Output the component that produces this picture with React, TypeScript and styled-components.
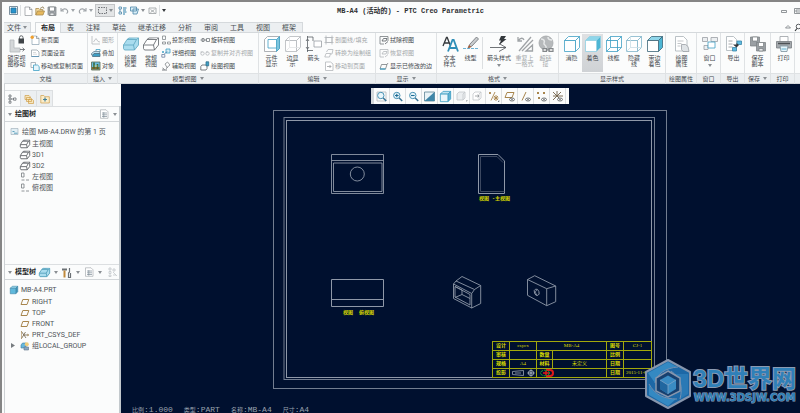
import React from "react";
import styled, { createGlobalStyle } from "styled-components";

const GlobalStyle = createGlobalStyle`
  *, *::before, *::after { box-sizing: border-box; }
  html, body, #root { height: 100%; margin: 0; }
  body { background: #fbfcfc; overflow: hidden; }
  button { font: inherit; color: inherit; border: 0; padding: 0; margin: 0; background: none; }
  svg { display: block; flex: none; overflow: visible; }
  ul { list-style: none; margin: 0; padding: 0; }
`;

const ui = `"Roboto", "Noto Sans CJK SC", sans-serif`;
const mono = `"Liberation Mono", "Noto Sans CJK SC", monospace`;

const BLUE = "#3f9fc4";
const DARK = "#5a5f64";
const GREY = "#b4b8bb";
const TAN = "#a8864e";

/* ---------- window ---------- */

const Window = styled.div`
  height: 100%;
  display: flex;
  flex-direction: column;
  border-top: 2px solid #858585;
  border-left: 2px solid #858585;
  padding-left: 2px;
  background: #fbfcfc;
  color: #44494e;
  font-family: ${ui};
  font-size: 6px;
  overflow: hidden;
`;

const TitleBar = styled.header`
  display: flex;
  align-items: center;
  height: 17px;
  flex: none;
`;

const QuickBar = styled.div`
  flex: 1 1 0;
  display: flex;
  align-items: center;
  padding-left: 3px;
`;

const QuickButton = styled.button<{ $arrow?: boolean }>`
  width: ${(p) => (p.$arrow ? 6 : 12)}px;
  height: 14px;
  display: flex;
  align-items: center;
  justify-content: center;
`;

const SelectPair = styled.div`
  display: flex;
  height: 13px;
  align-items: center;
  margin: 0 1px;
  border: 1px solid #c3c5c7;
  background: #e3e5e6;
`;

const VLine = styled.span<{ $h: number }>`
  width: 1px;
  height: ${(p) => p.$h}px;
  margin: 0 1px;
  background: #dcdfe1;
  align-self: center;
`;

const Title = styled.h1`
  margin: 0;
  padding-left: 14px;
  font: bold 7px/10px ${mono};
  color: #2f3133;
  white-space: pre;
`;

const WindowControls = styled.div`
  flex: 1 1 0;
  display: flex;
  justify-content: flex-end;
  align-items: center;
  gap: 7px;
  overflow: hidden;
`;

/* ---------- ribbon ---------- */

const TabRow = styled.nav`
  display: flex;
  align-items: stretch;
  height: 14px;
  flex: none;
  padding-top: 3px;
  border-bottom: 1px solid #d5d9dc;
`;

const Tab = styled.button<{ $active?: boolean; $file?: boolean }>`
  display: flex;
  align-items: center;
  gap: 2px;
  padding: 0 ${(p) => (p.$file ? 3 : p.$active ? 5 : 6)}px;
  font-size: 7px;
  line-height: 8px;
  white-space: nowrap;
  border-top: 1px solid #d5d9dc;
  background: ${(p) => (p.$active ? "#fbfcfc" : "#eceff1")};
  font-weight: ${(p) => (p.$active ? 700 : 400)};
  color: ${(p) => (p.$active ? "#25282a" : "#4a4f54")};
  border-right: ${(p) => (p.$file || p.$active ? "1px solid #d5d9dc" : "0")};
  border-left: ${(p) => (p.$active ? "1px solid #d5d9dc" : "0")};
  margin-right: ${(p) => (p.$file ? 4 : 0)}px;
  margin-bottom: ${(p) => (p.$active ? -1 : 0)}px;
  &:last-of-type { border-right: 1px solid #d5d9dc; }
`;

const TabTools = styled.div`
  margin-left: auto;
  display: flex;
  align-items: center;
  gap: 4px;
  overflow: hidden;
`;

const Ribbon = styled.div`
  display: flex;
  flex: none;
  height: 51px;
  overflow: hidden;
`;

const GroupBox = styled.section<{ $w: number }>`
  width: ${(p) => p.$w}px;
  flex: none;
  display: flex;
  flex-direction: column;
  border-right: 1px solid #dfe2e4;
`;

const GroupBody = styled.div`
  flex: 1;
  display: flex;
  padding-left: 2px;
`;

const GroupLabel = styled.div`
  height: 11px;
  display: flex;
  align-items: center;
  justify-content: center;
  gap: 3px;
  border-top: 1px solid #dfe2e4;
  border-bottom: 1px solid #d2d6d9;
  background: #eceff1;
  white-space: nowrap;
  line-height: 8px;
`;

const RibbonRest = styled.div`
  flex: 1;
  display: flex;
  flex-direction: column;
  justify-content: flex-end;
`;

const BigButton = styled.button<{ $w?: number; $on?: boolean; $off?: boolean }>`
  width: ${(p) => p.$w ?? 21}px;
  flex: none;
  margin: 1px 0;
  padding-top: 2px;
  display: flex;
  flex-direction: column;
  align-items: center;
  line-height: 6px;
  white-space: pre;
  text-align: center;
  color: ${(p) => (p.$off ? "#a3a7aa" : "#44494e")};
  background: ${(p) => (p.$on ? "linear-gradient(#dfe1e3, #cfd2d5)" : "none")};
  & > svg { margin-bottom: 3px; }
  & > span + svg { margin: 3px 0 0; }
`;

const Stack = styled.div<{ $w?: number; $indent?: number }>`
  display: flex;
  flex-direction: column;
  flex: none;
  width: ${(p) => (p.$w ? `${p.$w}px` : "auto")};
  margin-left: ${(p) => p.$indent ?? 0}px;
`;

const SmallButton = styled.button<{ $off?: boolean }>`
  display: flex;
  align-items: center;
  gap: 1px;
  height: 13px;
  line-height: 8px;
  white-space: nowrap;
  color: ${(p) => (p.$off ? "#a3a7aa" : "#44494e")};
`;

/* ---------- body ---------- */

const Body = styled.div`
  flex: 1;
  min-height: 0;
  display: flex;
`;

const Side = styled.aside`
  width: 117px;
  flex: none;
  display: flex;
  flex-direction: column;
  padding-top: 6px;
  border-left: 1px solid #cdd1d4;
`;

const SideTabs = styled.div`
  display: flex;
  height: 16px;
  flex: none;
`;

const SideTab = styled.button<{ $active?: boolean }>`
  width: 16px;
  display: flex;
  align-items: center;
  justify-content: center;
  border: 1px solid #dcdfe1;
  border-left: 0;
  border-bottom: 0;
  background: ${(p) => (p.$active ? "#fbfcfc" : "#eceff1")};
`;

const Pane = styled.section<{ $fixed?: boolean }>`
  flex: ${(p) => (p.$fixed ? "0 0 158px" : "1")};
  border-right: 2px solid #c3c9cd;
  overflow: hidden;
`;

const PaneHead = styled.div`
  display: flex;
  align-items: center;
  height: 16px;
  padding: 0 1px 0 3px;
  gap: 3px;
  border-top: 1px solid #dcdfe1;
  border-bottom: 1px solid #d2d6d9;
`;

const PaneTitle = styled.h2`
  margin: 0;
  font-size: 7px;
  line-height: 8px;
  font-weight: 700;
  color: #25282a;
  white-space: nowrap;
`;

const HeadTools = styled.div<{ $push?: boolean }>`
  display: flex;
  align-items: center;
  gap: 2px;
  margin-left: ${(p) => (p.$push ? "auto" : "0")};
`;

const HeadButton = styled.button<{ $arrow?: boolean }>`
  width: ${(p) => (p.$arrow ? 7 : 11)}px;
  height: 14px;
  display: flex;
  align-items: center;
  justify-content: center;
`;

const Tree = styled.ul`
  padding-top: 4px;
`;

const Node = styled.li<{ $level: number }>`
  display: flex;
  align-items: center;
  gap: ${(p) => (p.$level ? 2 : 3)}px;
  height: 11px;
  margin-bottom: ${(p) => (p.$level ? 0 : 1)}px;
  padding-left: ${(p) => (p.$level ? 15 : 5)}px;
  font-size: 7px;
  line-height: 10px;
  white-space: nowrap;
  color: #4e5358;
`;

const Expander = styled.button`
  width: 5px;
  margin-left: -9px;
  margin-right: 2px;
`;

const Canvas = styled.main`
  position: relative;
  flex: 1;
  min-width: 0;
  display: flex;
  flex-direction: column;
  align-items: center;
  padding: 4px 0 0 19px;
  background: #00102f;
  overflow: hidden;
`;

const ViewBar = styled.div`
  display: flex;
  height: 16px;
  flex: none;
  padding-right: 3px;
  background: #fbfcfc;
  border-left: 3px solid #d5d9dc;
`;

const ViewButton = styled.button`
  width: 16px;
  display: flex;
  align-items: center;
  justify-content: center;
  border-right: 1px solid #dcdfe1;
`;

const Sheet = styled.div`
  position: relative;
  flex: none;
  width: 394px;
  height: 280px;
  margin-top: 6px;
`;

const Caption = styled.span<{ $x: number; $y: number }>`
  position: absolute;
  left: ${(p) => p.$x}px;
  top: ${(p) => p.$y}px;
  font: bold 5px/6px ${mono};
  color: #d6d600;
  white-space: pre;
`;

const TitleBlock = styled.table`
  position: absolute;
  right: 15px;
  bottom: 12px;
  width: 159px;
  table-layout: fixed;
  border-collapse: collapse;
  font: 5px/6px "Liberation Serif", "Noto Sans CJK SC", serif;
  color: #dede00;
  td, th {
    height: 9px;
    padding: 0;
    border: 1px solid #a3a80c;
    text-align: center;
    font-weight: 400;
    white-space: nowrap;
  }
  th { font-weight: 700; }
`;

const Symbols = styled.div`
  display: flex;
  align-items: center;
  justify-content: center;
  gap: 3px;
`;

const Status = styled.footer`
  align-self: stretch;
  display: flex;
  gap: 11px;
  margin-top: auto;
  margin-left: -8px;
  height: 8px;
  flex: none;
  font: 8px/10px ${mono};
  color: #98a0ad;
  white-space: nowrap;
`;

const StatusKey = styled.span`
  font-size: 6px;
`;

const Watermark = styled.div`
  position: absolute;
  right: 4px;
  bottom: 4px;
  display: flex;
  align-items: center;
  gap: 2px;
`;

const Brand = styled.div`
  display: flex;
  flex-direction: column;
  align-items: center;
  color: #2f80b8;
  font-family: "Liberation Sans", "Noto Sans CJK SC", sans-serif;
  font-weight: 700;
  -webkit-text-stroke: 2px #8c9bb2;
  paint-order: stroke fill;
  white-space: nowrap;
`;

const BrandName = styled.span`
  font-size: 24px;
  line-height: 26px;
`;

const BrandUrl = styled.span`
  font-family: "DejaVu Sans", sans-serif;
  font-size: 10px;
  line-height: 11px;
  -webkit-text-stroke-width: 1px;
`;

/* ---------- icons ---------- */

const Svg = ({ s = 10, children }: { s?: number; children: React.ReactNode }) => (
  <svg width={s} height={s} viewBox={`0 0 ${s} ${s}`} fill="none" stroke={DARK} strokeWidth="0.8" aria-hidden="true">
    {children}
  </svg>
);

const Caret = ({ color = "#8a8f93" }: { color?: string }) => (
  <svg width="4" height="3" viewBox="0 0 4 3" aria-hidden="true">
    <path d="M0 0h4L2 3z" fill={color} />
  </svg>
);

type CubeProps = { s?: number; front?: string; top?: string; side?: string; line?: string; wire?: string };
const Cube = ({ s = 16, front = "#fff", top = "#fff", side = "#fff", line = BLUE, wire }: CubeProps) => (
  <svg width={s} height={s} viewBox="0 0 16 16" fill="none" stroke={line} strokeWidth={s < 14 ? 1.2 : 0.8} aria-hidden="true">
    <path d="M.5 4.5 4.5.5h11l-4 4z" fill={top} />
    <path d="M11.5 4.5l4-4v11l-4 4z" fill={side} />
    <path d="M.5 4.5h11v11H.5z" fill={front} />
    {wire && <path d="M4.5 .5v11h11M4.5 11.5l-4 4" stroke={wire} />}
  </svg>
);

const BlockShape = ({ s = 16, fill = "#fff", line = DARK }: { s?: number; fill?: string; line?: string }) => (
  <svg width={s} height={s} viewBox="0 0 16 16" fill={fill} stroke={line} strokeWidth={s < 14 ? 1.4 : 0.8} aria-hidden="true">
    <path d="M4 3.5 6 2h9.500v7l-4 5H1.500L.5 12.500V9z" />
    <path d="M4 3.500h9.500L15.500 2M13.500 3.500 10.500 9H.5M10.500 9l1 5" />
  </svg>
);

const LockView = () => (
  <Svg s={16}>
    <path d="M1 4h4v8h6v4H1z" fill="#d4d7d9" stroke={GREY} />
    <path d="M9.500 2.500h5.500v5H9.500z" fill="#3f4448" stroke="none" />
    <path d="M10.500 3V1.500a1.700 1.700 0 0 1 3.500 0V3" stroke="#3f4448" />
    <path d="M11 13.500h4.500M13.500 11.700l2 1.800-2 1.800" />
  </Svg>
);
const Page = ({ mark }: { mark?: string }) => (
  <Svg>
    <path d="M2 1h4.500L9 3.500V9.500H2z" fill="#fff" stroke={mark ? "#8aa0b0" : "#8f9498"} strokeWidth="0.7" />
    <path d="M6.500 1v2.500H9" strokeWidth="0.5" />
    {mark && <circle cx="2.2" cy="2.2" r="1.7" fill={mark} stroke="none" />}
  </Svg>
);
const PageSetup = () => (
  <Svg><path d="M1.500 2h5.500l2 2v4.500h-7.500z" fill="#fff" stroke="#9aa4ac" /><path d="M1.500 8.500h7.500" stroke="#5591b5" /><path d="M3 4.500h3M3 6.200h4" strokeWidth=".5" stroke={GREY} /></Svg>
);
const CopyPage = () => (
  <Svg><path d="M1 1.500h4.500v5H1z" fill="#fff" stroke="#9aa4ac" /><path d="M3.500 4h4l1.700 1.500v4H3.500z" fill="#e6f5fb" stroke={BLUE} /></Svg>
);
const Graph = () => <Svg><path d="M1 1v8h8" stroke={GREY} /><path d="M2.500 7 5 3.500l2 3 2 .5" stroke={GREY} /></Svg>;
const Overlay = () => (
  <Svg><path d="M.5 5.500 3 3.500h6l-2 3.500H.5z" fill="#bfe3f1" stroke="#6c8290" /><path d="M1.500 7.500 3 5.500h6v3H1.500z" fill={BLUE} stroke="#4b6d80" /><path d="M5 3V1.500h4v2" stroke={BLUE} /></Svg>
);
const ObjectPic = () => (
  <Svg><path d="M.5 1h8.500v8H.5z" fill="#6cbde2" stroke="#586a50" /><path d="M1 6h7.500v2.500H1z" fill="#8a6a2a" stroke="none" /><path d="M3 1.500v6M6.500 3v5" stroke="#3c6b3c" strokeWidth="1.6" /><path d="M3.500 5h3" stroke="#f1d067" /></Svg>
);
const Projection = () => <Svg><path d="M1.500 1h3v3.500h-3zM1.500 7h3v2h-3zM6.500 7h3v2h-3z" stroke="#83888c" /></Svg>;
const Detail = () => (
  <Svg><path d="M5 1h4v4H5z" fill="#d5edf6" stroke={BLUE} /><path d="M.8 6.500h3v2.700h-3z" stroke="#6b7fa0" /><path d="M3.500 6 6 3.500" stroke="#3c70a0" /><circle cx="2" cy="4" r="1" fill={BLUE} stroke="none" /></Svg>
);
const Auxiliary = () => <Svg><path d="M4 3l2.500-2L9 4 6 6.500z" stroke="#83888c" /><path d="M1 9h5M1.500 7l2 1.500M5 7.500l1.500-1" /></Svg>;
const Rotate = () => <Svg><path d="M.5 5h3M6.500 3.500h3v3h-3zM2 3.500h2v3H2z" stroke="#777c80" /><path d="M4 5h2.500" /></Svg>;
const CopyAlign = () => <Svg><circle cx="2.5" cy="5.5" r="1.7" stroke={GREY} /><circle cx="7.5" cy="5.5" r="1.7" stroke={GREY} /><path d="M.5 4h2M6 4h2" stroke={GREY} /></Svg>;
const DrawView = () => <Svg><path d="M.8 5.500 2 4h5v3.500L6 9H.8z" fill="#fff" /><path d="M6 .8h2.700v4H6z" fill={BLUE} stroke="#2d6f8d" /></Svg>;
const Hatch = () => <Svg><path d="M2 2.500h6v5H2zM2 .5v9M8 .5v9M.5 2.500h9M.5 7.500h9" stroke={GREY} /></Svg>;
const Convert = () => <Svg><path d="M2.500 4 4 1.500h5L8 6H5" stroke={GREY} /><path d="M.8 9 2 5.500h4.500L5.500 9z" stroke={GREY} fill="#fff" /></Svg>;
const MovePage = () => <Svg><path d="M1.500 1h5L9 3v6.500H1.500z" stroke={GREY} fill="#fff" /><path d="M3 5.500h4M5.500 4 7 5.500 5.500 7" stroke="#9a9ea1" /></Svg>;
const Erase = ({ off }: { off?: boolean }) => <Svg><path d="M1 9V1.500h8V6M1 9h4" stroke={off ? GREY : "#777c80"} /><path d="M3 6 4.500 3.500H8L7 6zM6 9l3-2.500" stroke={off ? GREY : DARK} /></Svg>;
const Edges = () => <Svg><path d="M1 8 2.500 3.500H8L9 2M1 8h5.500L8 3.500" stroke="#777c80" /><path d="M1 8h5.500" stroke={BLUE} strokeWidth="1.2" /></Svg>;

const CompDisplay = () => (
  <svg width="16" height="16" viewBox="0 0 16 16" fill="none" strokeWidth="0.8" aria-hidden="true">
    <path d="M.5 3.500 3.500.5h12v12l-3 3H.5z" stroke="#9aa0a5" fill="#fff" />
    <path d="M12.500 3.500l3-3v12l-3 3z" fill="#7cc5de" stroke={BLUE} />
    <path d="M4 3.500h8.500V12H4z" fill="#fff" stroke={BLUE} />
  </svg>
);
const ArrowsIcon = () => (
  <Svg s={16}><path d="M1 1h6M1 14.500h6M1.500 0v3M1.500 13v3M1.500 3v10M0 5l1.500-2L3 5M0 11l1.500 2L3 11M7 1v4" /><path d="M8 5h7.500v6H8z" stroke="#9aa0a5" fill="#fff" /></Svg>
);
const TextStyle = () => (
  <Svg s={16}><path d="M1 10 4.500 1.500h.7L8.500 10M2 7h5" stroke="#34383c" strokeWidth="1.3" /><path d="M6 15.500 10.500 4h1.200L16 15.500M7.500 12h6.500" stroke="#2f8fb8" strokeWidth="1.8" /></Svg>
);
const LineStyle = () => (
  <Svg s={16}><path d="M0 12.500h16" stroke="#4b9fc9" strokeDasharray="3 1" /><path d="M5 12 7 8l6.500-7L15.500 3 9 10z" fill="#c9ccce" stroke="#6b6f73" /><path d="M5 12l1-3 2.500 2z" fill="#b05a30" stroke="none" /></Svg>
);
const ArrowStyle = () => (
  <Svg s={16}><path d="M-1 11.500h16M8 7.500l7 4-7 4" stroke="#4c5155" /><path d="M10 0h5l-2 3h2.500L8 9l2-4.500H8z" fill="#34383c" stroke="none" /></Svg>
);
const Repeat = () => (
  <Svg s={16}><path d="M1 1v4h4M1 5c3-4 5-3 6-1M14 1 2 15M16 4 5 15M9 15h6.500V9z" stroke="#9fa3a6" strokeWidth="1.3" /></Svg>
);
const Link = () => (
  <Svg s={16}><circle cx="8" cy="7" r="7" fill="#b6b9bb" stroke="#a3a7aa" /><path d="M3 3c3 0 4 2 3 4s3 2 2 5M10 1c0 3 2 3 4 3" stroke="#e6e8e9" strokeWidth="1.5" /><path d="M5 12.500h3.500v3H5zM11 12.500h4v3h-4zM8 14h4" fill="#ddd" stroke="#84888b" strokeWidth="1.2" /></Svg>
);
const Props = () => (
  <Svg s={16}><path d="M1.500.5h8L13 4v11H1.500z" fill="#fff" stroke="#a9b2b8" /><path d="M3.500 5h6M3.500 7.500h4M3.500 10h3" stroke={GREY} /><path d="M7.500 8.500h4l2.500 2 1 5H9l-1.500-2z" fill="#dfe3e6" stroke="#9aa0a5" /></Svg>
);
const WindowsIcon = () => (
  <Svg s={16}><path d="M.5 1.500h5v4h-5zM9 1.500h6.500v4H9zM2 9.500h4v4H2z" stroke="#9aa0a5" fill="#eceff1" /><path d="M6 6h7v6H6z" fill="#fff" stroke={BLUE} /></Svg>
);
const ExportIcon = () => (
  <Svg s={16}><path d="M.5.5h7l3 3v11H.5z" fill="#fff" stroke="#a9b2b8" /><path d="M2.500 5h4M2.500 8h4M2.500 11h4" stroke="#8f9498" /><path d="M11 5h4.500v3.500H11zM6.500 11.500h4V15h-4z" fill="#5fbbe0" stroke="#3a86a8" /><path d="M7 8.500h3.500V7L13 9l-2.500 2.500z" fill="#34383c" stroke="none" /></Svg>
);
const Disk = () => (
  <svg width="10" height="10" viewBox="0 0 10 10" fill="#a5aaae" stroke="#777c80" strokeWidth=".7" aria-hidden="true">
    <path d="M1 1h8v8.500H2L1 8.500z" /><path d="M2.500 1h5v4h-5z" fill="#fff" /><path d="M3 7h4v2.500H3z" fill="#e7e9ea" />
  </svg>
);
const SaveCopy = () => (
  <svg width="16" height="16" viewBox="0 0 16 16" fill="#9a9fa3" stroke="#777c80" strokeWidth=".7" aria-hidden="true">
    <path d="M.5 1h9v9h-9z" /><path d="M2.500 1h5v4h-5z" fill="#fff" /><path d="M6.500 6.500h9V15h-9z" /><path d="M8.500 6.500h5v4h-5z" fill="#fff" /><path d="M9 12.500h4V15H9z" fill="#e7e9ea" />
  </svg>
);
const Printer = () => (
  <Svg s={16}><path d="M4 .5h8V6H4z" fill="#fff" stroke="#9aa0a5" /><path d="M.5 5.500h15V12H.5z" fill="#a5aaae" stroke="#777c80" /><path d="M2 7.500h12" stroke="#4c5155" strokeWidth="1.5" /><path d="M4 10h8l-1 5.500H5z" fill="#e6f5fb" stroke="#7a8f9a" /><path d="M5.500 13h5" stroke={BLUE} /></Svg>
);

const AppMark = () => <Svg s={9}><path d="M.5.5h8v8h-8z" stroke="#5d7587" /><path d="M2 2h5v5H2z" fill="#2793cc" stroke="#246f9a" /></Svg>;
const Folder = () => <Svg><path d="M.8 9V2.500h3l1 1h3V5" fill="#f5dca0" stroke="#a98b4f" /><path d="M.8 9 2.500 5h7L8 9z" fill="#e6b85c" stroke="#a98b4f" /><path d="M5 2.500 8 .8l1 2" stroke="#8b7a50" /></Svg>;
const Undo = ({ flip }: { flip?: boolean }) => <Svg s={9}><g transform={flip ? "matrix(-1 0 0 1 9 0)" : undefined}><path d="M1 2v3h3M1.200 5C3 2.500 6 2 7.500 4.500 8 6 7.500 7 6.500 7.500" stroke="#a0a5a9" strokeWidth="1.1" /></g></Svg>;
const SelectBox = () => <Svg s={9}><path d="M.5 1.500h8v6h-8z" stroke="#55595d" strokeDasharray="1.5 1" /></Svg>;
const Regen = () => <Svg s={9}><path d="M1 1h2.500v2H1zM1 6h2.500v2H1zM2 3v3" stroke="#4b86a8" /><path d="M5 2h3.500M5 4h3M5 6h3.500M5 8h2" stroke="#2f7fa8" strokeWidth="1.1" /></Svg>;
const Cascade = () => <Svg s={9}><path d="M.5 1h6v4h-6zM3 3h5.500L7 8H3z" fill="#d9eef7" stroke="#4b86a8" /></Svg>;
const CloseWin = () => <Svg s={9}><path d="M1 2h7v5.500H1zM2.500 3.500l4 3M6.500 3.500l-4 3" stroke="#8b9094" strokeWidth=".7" /></Svg>;

const TreeTab = () => <Svg><path d="M1 1h2v2H1zM1 4h2v2H1zM1 7.200h2v2H1zM5.500 4h2.500v2.200H5.500zM3 5h2.500" strokeWidth=".7" /></Svg>;
const Layers = () => <Svg><path d="M1 1.500h4l1 1v3H1zM2.500 3.500h4l1 1v3h-5zM4.500 5.500h4l1 1v3h-5z" fill="#f8e6bd" stroke="#cf9f4b" strokeWidth=".7" /></Svg>;
const Favs = () => <Svg><path d="M.8 9V1.500h3l1 1.200h4.500V9z" fill="#fbedc9" stroke="#cf9f4b" strokeWidth=".7" /><path d="M5 3.500v4M3 5.500h4" stroke="#3f7f9c" strokeWidth="1.2" /></Svg>;
const ListIcon = () => <Svg><path d="M1.500.8h5.500L9 2.800v6.500H1.500z" fill="#fff" stroke="#9aa0a5" strokeWidth=".6" /><path d="M3 4h5M3 5.800h5M3 7.500h5M4.800 3.200v5.500" stroke="#7d8b96" strokeWidth=".7" /></Svg>;
const DrawSheet = () => <Svg s={9}><path d="M1 1.500h7v6H1z" fill="#e2eff5" stroke="#98aab6" strokeWidth=".6" /><path d="M2.500 4.500h2M4 6.200h3.500" stroke="#3f8fb0" /></Svg>;
const SideView = () => <Svg><path d="M1.500 1h2.500v4h-2.500zM1.500 8h3M6 8h3" stroke="#777c80" /></Svg>;
const Hammer = () => <Svg s={11}><path d="M1 1.500h5v2H1z" fill="#6b7074" stroke="none" /><path d="M3.500 3.500v7" stroke="#c08a3c" strokeWidth="2" /><path d="M8.500 1v4l-1 1v4.500h2V6" stroke="#6b7074" strokeWidth="1.2" /></Svg>;
const Filter = () => <Svg><path d="M1 1h2v2H1zM1 4.500h2v2H1zM1 8h2v1.500H1zM5 2h2v2H5zM5 5l4 4M5 8h3" stroke="#c3c7ca" /></Svg>;
const PlaneIcon = () => <Svg><path d="M2.800 2.500h6L7 7.500H1z" stroke={TAN} strokeWidth="1" /></Svg>;
const Csys = () => <Svg><path d="M1.500 1.500 6 8M1.500 8.500 5.500 2M3.500 5h5" stroke="#6f6148" /><path d="M1.500 1v8M7 4l2 1-2 1" stroke={TAN} strokeWidth=".6" /></Svg>;
const GroupIcon = () => <Svg><path d="M1 4 2.500 2H6v5H1z" fill="#67b7dc" stroke="#417f9f" strokeWidth=".6" /><circle cx="6.8" cy="3.2" r="2" fill="#f0cd7a" stroke="none" /><path d="M4 6h4.500v3H4z" fill="#8ba8c4" stroke="#5f7488" strokeWidth=".6" /></Svg>;

const Zoom = ({ mark }: { mark?: string }) => (
  <Svg s={11}>
    {mark ? null : <path d="M1 1h9v9H1z" stroke={GREY} />}
    <circle cx="4.8" cy="4.5" r="3.2" fill="#e9f6fb" stroke="#4a93b5" strokeWidth="1" />
    <path d="M7.200 7l3 3" stroke="#3c7494" strokeWidth="1.5" />
    {mark && <path d={mark} stroke="#1e6c94" strokeWidth="1.1" />}
  </Svg>
);
const Repaint = () => <Svg s={11}><path d="M.5 1h10v9H.5z" fill="#e9f3f7" stroke="#5e8496" /><path d="M10.500 1v9H.5z" fill="#3f86a8" stroke="none" /></Svg>;
const Ghost = ({ solid }: { solid?: boolean }) => <Svg s={11}><path d="M1 3 3 1h6v6L7 9H1z" fill={solid ? "#eceff1" : "#fff"} stroke="#c3c7ca" /><path d="M7 3v6M7 3l2-2" stroke="#c3c7ca" /><path d={solid ? "M10 10h1v-1" : "M3 5h4M5.500 3.800 7 5 5.500 6.200"} stroke="#8f9498" /></Svg>;
const Eye = () => <><ellipse cx="8" cy="8.5" rx="2.5" ry="1.5" fill="#fff" stroke="#4f5356" strokeWidth=".8" /><circle cx="8" cy="8.5" r=".7" fill="#4f5356" stroke="none" /></>;
const Datum = () => <Svg s={11}><path d="M3 9.500 7 1M1 1l2 2M3 1 1 3M6 5l4 4M10 5 6 9M8 4v6M5.500 7h5" stroke={TAN} strokeWidth=".9" /><path d="M10 10.500h1v-1" /></Svg>;
const DatumPlane = () => <Svg s={11}><path d="M3 1.500h7L8 6.500H1z" stroke={TAN} strokeWidth="1" /><Eye /></Svg>;
const DatumAxis = () => <Svg s={11}><path d="M2 9.500 6 1" stroke={TAN} strokeWidth="1" /><Eye /></Svg>;
const DatumPoint = () => <Svg s={11}><path d="M1 1l2 2M3 1 1 3M7 1l2 2M9 1 7 3M2 6l2 2M4 6 2 8" stroke={TAN} strokeWidth="1" /><Eye /></Svg>;
const DatumCsys = () => <Svg s={11}><path d="M1 1l7 7M9 1 1 9M5 0v5h6M1 5h3" stroke="#6f6148" strokeWidth=".9" /><Eye /></Svg>;

/* ---------- drawing ---------- */

const Drawing = () => (
  <svg width="100%" height="100%" viewBox="273 110 394 280" fill="none" stroke="#8f98a8" strokeWidth="1" role="img" aria-label="MB-A4">
    <rect x="273.5" y="110.5" width="393" height="278" stroke="#727d90" />
    <rect x="284" y="117.5" width="370.5" height="262" stroke="#727d90" />
    <rect x="286.5" y="120.5" width="365" height="257" />
    <path d="M331.500 154.500h52v39h-52zM331.500 160.500h52M333.500 163h48.500v28.500h-48.500z" strokeWidth=".9" />
    <circle cx="357.3" cy="174" r="7" strokeWidth=".9" />
    <path d="M478.500 154.500h19.500l6.500 6.500v32.500h-26z" />
    <path d="M480.500 191.500V156.500h16.500l6 6M480.500 191.500h24" stroke="#4b576d" strokeWidth=".8" />
    <path d="M331.500 279.500h52v27h-52zM331.500 299.500h52" />
    <g strokeWidth=".9" strokeLinejoin="round">
      <path d="M453.500 284l2.500-3 6-4.500 18.700 9v18l-9 4.500-18.200-9.500z" />
      <path d="M456 281l18.500 8.500 6.200-4M453.500 284l18.200 9.500 2.800-4M471.700 293.500v14.500" />
      <path d="M455 286.500l15 8v10.500l-15-8zM462 290v4.500l8 4M462 294.500l-7 3M455 286.500l7 3.500" />
      <path d="M527.500 279.500l7.200-3.800 21 10.300v15.700l-9 4-19.200-10.400zM527.500 279.500l19.200 9.200 9-2.700M546.700 288.700v17" />
      <ellipse cx="536.7" cy="292.3" rx="2.3" ry="3.3" transform="rotate(-20 536.7 292.3)" />
      <path d="M537 290c-2 1-2 3 0 5" />
    </g>
  </svg>
);

const Logo = () => (
  <svg width="46" height="50" viewBox="0 0 46 50" aria-hidden="true">
    <path d="M23 1 45 13v24L23 49 1 37V13z" fill="#1d68a6" stroke="#8796ad" strokeWidth="2" strokeLinejoin="round" />
    <path d="M3 14 23 3l9 5C20 9 12 15 10 24z" fill="#3489c2" />
    <path d="M43 15v20l-8 5c2-10-1-18-9-25z" fill="#2a79b5" />
    <path d="M23 47 4 36V26c6 10 15 14 27 14z" fill="#3489c2" />
    <path d="M10 24C12 15 20 9 33 8M26 12c10 7 12 16 9 28M4 25c6 11 15 15 28 15" fill="none" stroke="#7290b2" strokeWidth="1" />
    <path d="M23 12 35 19v13L23 38 11 32V19z" fill="#17406f" stroke="#8796ad" strokeWidth="1.5" />
    <path d="M23 16.500 31 21v9l-8 5-8-5v-9z" fill="#3a8cc4" />
    <path d="M23 26v9l-8-5v-9z" fill="#2167a0" />
    <path d="M15 21l8 5 8-5M23 26v9" fill="none" stroke="#7ea3c6" strokeWidth=".8" />
  </svg>
);

/* ---------- composition ---------- */

type GroupProps = { label: string; w: number; menu?: boolean; children: React.ReactNode };
const Group = ({ label, w, menu, children }: GroupProps) => (
  <GroupBox $w={w} aria-label={label}>
    <GroupBody>{children}</GroupBody>
    <GroupLabel>{label}{menu && <Caret />}</GroupLabel>
  </GroupBox>
);

type BigProps = { icon: React.ReactNode; text: string; w?: number; on?: boolean; off?: boolean; menu?: boolean };
const Big = ({ icon, text, w, on, off, menu }: BigProps) => (
  <BigButton $w={w} $on={on} $off={off} disabled={off} aria-pressed={on}>
    {icon}<span>{text}</span>{menu && <Caret />}
  </BigButton>
);

const Small = ({ icon, text, off }: { icon: React.ReactNode; text: string; off?: boolean }) => (
  <SmallButton $off={off} disabled={off}>{icon}<span>{text}</span></SmallButton>
);

const tabs = ["表", "注释", "草绘", "继承迁移", "分析", "审阅", "工具", "视图", "框架"];

const viewTools: [string, React.ReactNode][] = [
  ["重新调整", <Zoom />],
  ["放大", <Zoom mark="M3 4.500h3.600M4.800 2.700v3.600" />],
  ["缩小", <Zoom mark="M3 4.500h3.600" />],
  ["重画", <Repaint />],
  ["显示样式", <Cube s={11} front="#e9f6fb" top="#bfe3f1" side="#5fb3d3" />],
  ["已保存视图", <Ghost solid />],
  ["视图管理器", <Ghost />],
  ["基准显示", <Datum />],
  ["平面显示", <DatumPlane />],
  ["轴显示", <DatumAxis />],
  ["点显示", <DatumPoint />],
  ["坐标系显示", <DatumCsys />],
];

const drawingNodes: [string, React.ReactNode][] = [
  ["主视图", <BlockShape s={10} />],
  ["3D1", <BlockShape s={10} />],
  ["3D2", <BlockShape s={10} />],
  ["左视图", <SideView />],
  ["俯视图", <SideView />],
];

const statusItems = [["比例", "1.000"], ["类型", "PART"], ["名称", "MB-A4"], ["尺寸", "A4"]];

export default function App() {
  return (
    <Window>
      <GlobalStyle />
      <TitleBar>
        <QuickBar>
          <QuickButton aria-label="Creo"><AppMark /></QuickButton>
          <VLine $h={11} />
          <QuickButton aria-label="新建"><Page /></QuickButton>
          <QuickButton aria-label="打开"><Folder /></QuickButton>
          <QuickButton aria-label="保存"><Disk /></QuickButton>
          <QuickButton aria-label="撤消"><Undo /></QuickButton>
          <QuickButton $arrow aria-label="撤消列表"><Caret color="#a0a5a9" /></QuickButton>
          <QuickButton aria-label="重做"><Undo flip /></QuickButton>
          <QuickButton $arrow aria-label="重做列表"><Caret color="#a0a5a9" /></QuickButton>
          <SelectPair>
            <QuickButton aria-label="选择"><SelectBox /></QuickButton>
            <QuickButton $arrow aria-label="选择选项"><Caret /></QuickButton>
          </SelectPair>
          <QuickButton aria-label="重新生成"><Regen /></QuickButton>
          <QuickButton aria-label="窗口"><Cascade /></QuickButton>
          <QuickButton $arrow aria-label="窗口列表"><Caret /></QuickButton>
          <QuickButton aria-label="关闭"><CloseWin /></QuickButton>
          <VLine $h={11} />
          <QuickButton $arrow aria-label="自定义"><Caret color="#34383c" /></QuickButton>
        </QuickBar>
        <Title>MB-A4 (活动的) - PTC Creo Parametric</Title>
        <WindowControls>
          <button aria-label="最小化"><Svg s={6}><path d="M.5 2.500h5v2h-5z" stroke="#777c80" /></Svg></button>
          <button aria-label="最大化"><Svg s={6}><path d="M.5 .5h7v5h-7zM2 2h5v2H2z" stroke="#777c80" /></Svg></button>
        </WindowControls>
      </TitleBar>

      <TabRow role="tablist">
        <Tab $file>文件<Caret /></Tab>
        <Tab $active role="tab" aria-selected="true">布局</Tab>
        {tabs.map((t) => <Tab key={t} role="tab">{t}</Tab>)}
        <TabTools>
          <button aria-label="折叠功能区"><Svg s={6}><path d="M.5 4 3 1.500 5.500 4z" stroke="#777c80" /></Svg></button>
          <button aria-label="搜索"><Svg s={5}><circle cx="3.5" cy="1.5" r="2.3" stroke="#34383c" /><path d="M2 3.500 0 6" stroke="#34383c" strokeWidth="1.2" /></Svg></button>
        </TabTools>
      </TabRow>

      <Ribbon>
        <Group label="文档" w={84}>
          <Big icon={<LockView />} text={"锁定视\n图移动"} />
          <Stack $indent={3}>
            <Small icon={<Page mark="#f0a030" />} text="新页面" />
            <Small icon={<PageSetup />} text="页面设置" />
            <Small icon={<CopyPage />} text="移动或复制页面" />
          </Stack>
        </Group>
        <Group label="插入" w={30} menu>
          <Stack $indent={1}>
            <Small off icon={<Graph />} text="图形" />
            <Small icon={<Overlay />} text="叠加" />
            <Small icon={<ObjectPic />} text="对象" />
          </Stack>
        </Group>
        <Group label="模型视图" w={141} menu>
          <Big icon={<BlockShape fill="#a9dcee" line="#5ba5bf" />} text={"绘图\n模型"} />
          <Big icon={<BlockShape />} text={"常规\n视图"} w={20} />
          <Stack $w={39}>
            <Small icon={<Projection />} text="投影视图" />
            <Small icon={<Detail />} text="详细视图" />
            <Small icon={<Auxiliary />} text="辅助视图" />
          </Stack>
          <Stack>
            <Small icon={<Rotate />} text="旋转视图" />
            <Small off icon={<CopyAlign />} text="复制并对齐视图" />
            <Small icon={<DrawView />} text="绘图视图" />
          </Stack>
        </Group>
        <Group label="编辑" w={117} menu>
          <Big icon={<CompDisplay />} text={"元件\n显示"} />
          <Big icon={<Cube line={GREY} wire="#e1e3e5" />} text={"边显\n示"} />
          <Big icon={<ArrowsIcon />} text="箭头" />
          <Stack>
            <Small off icon={<Hatch />} text="剖面线/填充" />
            <Small off icon={<Convert />} text="转换为绘制组" />
            <Small off icon={<MovePage />} text="移动到页面" />
          </Stack>
        </Group>
        <Group label="显示" w={61} menu>
          <Stack $indent={1}>
            <Small icon={<Erase />} text="拭除视图" />
            <Small off icon={<Erase off />} text="恢复视图" />
            <Small icon={<Edges />} text="显示已修改的边" />
          </Stack>
        </Group>
        <Group label="格式" w={122} menu>
          <Big icon={<TextStyle />} text={"文本\n样式"} />
          <Big icon={<LineStyle />} text="线型" />
          <VLine $h={32} />
          <Big icon={<ArrowStyle />} text="箭头样式" w={30} menu />
          <Big off icon={<Repeat />} text={"重复上\n一格式"} />
          <Big off icon={<Link />} text={"超链\n接"} />
        </Group>
        <Group label="显示样式" w={107}>
          <Big icon={<Cube />} text="消隐" />
          <Big on icon={<Cube front="#fff" top="#8fd6ea" side="#4db6d4" line="#8fcfe2" />} text="着色" />
          <Big icon={<Cube wire={BLUE} />} text="线框" />
          <Big icon={<Cube wire="#c9dde6" line="#7fb4c9" />} text={"隐藏\n线"} w={20} />
          <Big icon={<Cube top="#8fd6ea" side="#4db6d4" line="#3b6577" />} text={"带边\n着色"} />
        </Group>
        <Group label="绘图属性" w={31}>
          <Big icon={<Props />} text={"绘图\n属性"} w={27} />
        </Group>
        <Group label="窗口" w={24}>
          <Big icon={<WindowsIcon />} text="窗口" menu />
        </Group>
        <Group label="导出" w={24}>
          <Big icon={<ExportIcon />} text="导出" />
        </Group>
        <Group label="保存" w={26} menu>
          <Big icon={<SaveCopy />} text={"保存\n副本"} />
        </Group>
        <Group label="打印" w={24}>
          <Big icon={<Printer />} text="打印" />
        </Group>
        <RibbonRest><GroupLabel /></RibbonRest>
      </Ribbon>

      <Body>
        <Side>
          <SideTabs>
            <SideTab $active aria-label="模型树"><TreeTab /></SideTab>
            <SideTab aria-label="文件夹浏览器"><Layers /></SideTab>
            <SideTab aria-label="收藏夹"><Favs /></SideTab>
          </SideTabs>
          <Pane $fixed>
            <PaneHead>
              <Caret />
              <PaneTitle>绘图树</PaneTitle>
              <HeadTools $push>
                <HeadButton aria-label="设置"><ListIcon /></HeadButton>
                <HeadButton $arrow aria-label="设置菜单"><Caret /></HeadButton>
              </HeadTools>
            </PaneHead>
            <Tree>
              <Node $level={0}><DrawSheet />绘图 MB-A4.DRW 的第 1 页</Node>
              {drawingNodes.map(([name, icon]) => <Node key={name} $level={1}>{icon}{name}</Node>)}
            </Tree>
          </Pane>
          <Pane>
            <PaneHead>
              <Caret />
              <PaneTitle>模型树</PaneTitle>
              <HeadTools>
                <HeadButton aria-label="显示"><BlockShape s={11} fill="#a9dcee" line="#5ba5bf" /></HeadButton>
                <HeadButton $arrow aria-label="显示菜单"><Caret /></HeadButton>
                <HeadButton aria-label="设置"><Hammer /></HeadButton>
                <HeadButton $arrow aria-label="设置菜单"><Caret /></HeadButton>
                <HeadButton aria-label="列"><ListIcon /></HeadButton>
                <HeadButton $arrow aria-label="列菜单"><Caret /></HeadButton>
              </HeadTools>
              <HeadTools $push>
                <HeadButton aria-label="过滤"><Filter /></HeadButton>
              </HeadTools>
            </PaneHead>
            <Tree>
              <Node $level={0}><Cube s={8} front="#5fb9dc" top="#9fdcf0" side="#3c93b8" line="#3f86a8" />MB-A4.PRT</Node>
              <Node $level={1}><PlaneIcon />RIGHT</Node>
              <Node $level={1}><PlaneIcon />TOP</Node>
              <Node $level={1}><PlaneIcon />FRONT</Node>
              <Node $level={1}><Csys />PRT_CSYS_DEF</Node>
              <Node $level={1}>
                <Expander aria-label="展开"><svg width="4" height="5" viewBox="0 0 4 5"><path d="M0 0v5l4-2.500z" fill="#777c80" /></svg></Expander>
                <GroupIcon />组LOCAL_GROUP
              </Node>
            </Tree>
          </Pane>
        </Side>

        <Canvas>
          <ViewBar role="toolbar">
            {viewTools.map(([name, icon]) => <ViewButton key={name} aria-label={name}>{icon}</ViewButton>)}
          </ViewBar>
          <Sheet>
            <Drawing />
            <Caption $x={206} $y={86}>视图 -主视图</Caption>
            <Caption $x={70} $y={200}>视图  俯视图</Caption>
            <TitleBlock>
              <colgroup>
                {[17, 27, 16, 54, 17, 28].map((w, i) => <col key={i} width={w} />)}
              </colgroup>
              <tbody>
                <tr><th>设计</th><td>csycx</td><td colSpan={2}>MB-A4</td><th>图号</th><td>CJ-1</td></tr>
                <tr><th>审核</th><td /><th>数量</th><td /><th>比例</th><td /></tr>
                <tr><th>规格</th><td>A4</td><th>材料</th><td>未定义</td><th>日期</th><td /></tr>
                <tr>
                  <th>投影</th>
                  <td>
                    <Symbols>
                      <svg width="12" height="6" viewBox="0 0 12 6" fill="none" stroke="#9aa3b2"><path d="M.5 1.500 11.500.5v5l-11-1zM3 3h6" strokeWidth=".8" /></svg>
                      <svg width="8" height="8" viewBox="0 0 8 8" fill="none" stroke="#9aa3b2"><circle cx="4" cy="4" r="2.6" /><circle cx="4" cy="4" r="1" /><path d="M4 0v8M0 4h8" strokeWidth=".7" /></svg>
                    </Symbols>
                  </td>
                  <td colSpan={2}>
                    <svg width="18" height="8" viewBox="-3 0 18 8" fill="none">
                      <path d="M6 1h4a3 3 0 0 1 0 6H6" stroke="#e01818" strokeWidth="2" />
                      <ellipse cx="5" cy="4" rx="4.5" ry="2.8" stroke="#18a030" strokeDasharray="3 1" />
                      <path d="M3 4h6M6 2v4" stroke="#e01818" strokeWidth="1.5" />
                    </svg>
                  </td>
                  <th>日期</th>
                  <td>2015-11-05</td>
                </tr>
              </tbody>
            </TitleBlock>
          </Sheet>
          <Status>
            {statusItems.map(([k, v]) => <span key={k}><StatusKey>{k}</StatusKey>:{v}</span>)}
          </Status>
          <Watermark>
            <Logo />
            <Brand>
              <BrandName>3D世界网</BrandName>
              <BrandUrl>WWW.3DSJW.COM</BrandUrl>
            </Brand>
          </Watermark>
        </Canvas>
      </Body>
    </Window>
  );
}
